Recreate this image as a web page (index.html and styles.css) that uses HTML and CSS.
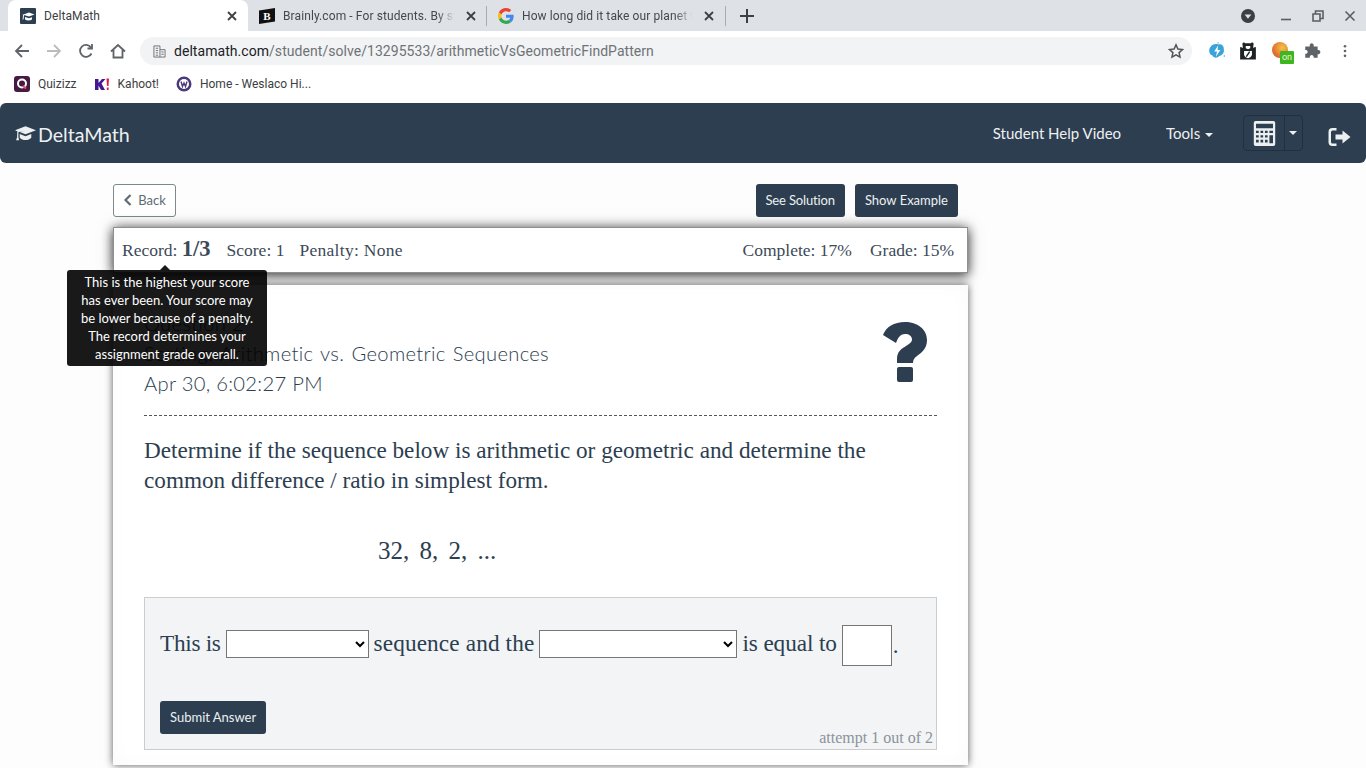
FILE: index.html
```html
<!DOCTYPE html>
<html lang="en">
<head>
<meta charset="utf-8">
<title>DeltaMath</title>
<link rel="stylesheet" href="styles.css">
</head>
<body>
<div class="tabstrip">
  <div class="tab tab-active">
    <svg class="fav" viewBox="0 0 16 16"><rect width="16" height="16" rx="1" fill="#2c3e50"/><path d="M2 7l7-2.500 5.500 2L9 8.600 4.500 7.200 8.500 6.400 4 7.200 3.500 11.500 2.600 11.500 3 6.900zM5 9l4 1.200 3-1v2.200c-2 1.300-5 1.300-7 0z" fill="#fff"/></svg>
    <span class="tab-title">DeltaMath</span>
    <svg class="tab-x" viewBox="0 0 10 10"><path d="M1 1l8 8M9 1l-8 8"/></svg>
  </div>
  <div class="tab tab-b">
    <svg class="fav" viewBox="0 0 16 16"><path d="M0 2.500L16 0V13.500L0 16z" fill="#111"/><text x="8" y="12" class="fav-b">B</text></svg>
    <span class="tab-title tab-fade">Brainly.com - For students. By students.</span>
    <svg class="tab-x" viewBox="0 0 10 10"><path d="M1 1l8 8M9 1l-8 8"/></svg>
  </div>
  <div class="sep"></div>
  <div class="tab tab-c">
    <svg class="fav" viewBox="0 0 48 48"><path fill="#EA4335" d="M24 9.500c3.500 0 6.700 1.300 9.100 3.500l6.800-6.800C35.800 2.400 30.300 0 24 0 14.600 0 6.500 5.400 2.600 13.200l7.900 6.200C12.400 13.700 17.700 9.500 24 9.500z"/><path fill="#4285F4" d="M46.900 24.500c0-1.600-.1-3.100-.4-4.500H24v9h12.900c-.6 3-2.200 5.500-4.700 7.200l7.700 6c4.500-4.200 7-10.300 7-17.700z"/><path fill="#FBBC05" d="M10.500 28.600c-.5-1.400-.8-3-.8-4.600s.3-3.200.8-4.600l-7.900-6.200C.9 16.500 0 20.100 0 24s.9 7.500 2.600 10.800z"/><path fill="#34A853" d="M24 48c6.500 0 11.900-2.100 15.900-5.800l-7.700-6c-2.200 1.500-5 2.300-8.200 2.300-6.300 0-11.600-4.200-13.500-9.900l-7.900 6.100C6.500 42.600 14.600 48 24 48z"/></svg>
    <span class="tab-title tab-fade">How long did it take our planet to form?</span>
    <svg class="tab-x" viewBox="0 0 10 10"><path d="M1 1l8 8M9 1l-8 8"/></svg>
  </div>
  <div class="sep"></div>
  <svg class="newtab" viewBox="0 0 14 14"><path d="M7 0v14M0 7h14"/></svg>
  <div class="winctl">
    <svg class="ctl-search" viewBox="0 0 14 14"><circle cx="7" cy="7" r="7" fill="#3c4043"/><path d="M3.600 5.500h6.800L7 9.800z" fill="#dee1e6"/></svg>
    <svg class="ctl" viewBox="0 0 12 12"><path d="M1 9.500h10"/></svg>
    <svg class="ctl" viewBox="0 0 12 12"><path d="M1 4h7v7H1zM3.500 3.500V1H11v7.500H8.500"/></svg>
    <svg class="ctl" viewBox="0 0 12 12"><path d="M1.500 1.500l9 9M10.500 1.500l-9 9"/></svg>
  </div>
</div>

<div class="toolbar">
  <svg class="tool" viewBox="0 0 16 16"><path d="M15 8H2M8 2L2 8l6 6"/></svg>
  <svg class="tool tool-off" viewBox="0 0 16 16"><path d="M1 8h13M8 2l6 6-6 6"/></svg>
  <svg class="tool" viewBox="0 0 16 16"><path d="M13.500 10.500A6 6 0 1 1 13 4.500M14 1v4.500H9.500"/></svg>
  <svg class="tool" viewBox="0 0 16 16"><path d="M1 8.500L8 2l7 6.500M3.500 7v7.500h9V7"/></svg>
  <div class="omnibox">
    <svg class="site-icon" viewBox="0 0 14 14"><path d="M1 1h6.500v12H1zM7.500 5H13v8H7.500M3 3.500h2.500M3 6h2.500M3 8.500h2.500M3 11h2.500M9 7.500h2.500M9 10h2.500"/></svg>
    <span class="url"><span class="url-host">deltamath.com</span>/student/solve/13295533/arithmeticVsGeometricFindPattern</span>
    <svg class="star" viewBox="0 0 16 16"><path d="M8 1.800l1.900 4.200 4.600.5-3.400 3.100.9 4.500L8 11.800l-4 2.300.9-4.500L1.500 6.500l4.600-.5z"/></svg>
  </div>
  <div class="exts">
    <svg class="ext" viewBox="0 0 16 16"><path d="M2.500 4C4.500 1.500 7.500 1.500 9 2.200c2.500-1 5.500 1 5 4.300.8 3-1.500 5.500-4 6-2 2.500-5.500 1.500-6-.5C1 11.500 0 6.500 2.500 4z" fill="#3aa3d8"/><path d="M9 3L5.500 8.500h2.500L7 13l4-6H8.500z" fill="#fff"/><circle cx="14.500" cy="12.500" r=".7" fill="#3aa3d8"/><circle cx="9" cy=".8" r=".6" fill="#3aa3d8"/></svg>
    <svg class="ext ext-bear" viewBox="0 0 16 16"><path d="M3 1.500a1.500 1.500 0 0 1 2.500-.5h5a1.500 1.500 0 0 1 2.500.5L12.500 5l2.500-.5V15.500H1V4.500L3.500 5z" fill="#1e2325"/><path d="M6 3.500h4v2l-2 1-2-1z" fill="#fff"/><path d="M4.500 8h7v3c0 1.500-2 3-3.500 3.500C6.500 14 4.500 12.500 4.500 11z" fill="#fff"/><path d="M9.500 8.500L6.500 13" stroke="#1e2325" stroke-width="1.300"/></svg>
    <div class="ext-on">
      <div class="orb"></div>
      <span class="on-badge">on</span>
    </div>
    <svg class="ext ext-puz" viewBox="0 0 16 16"><path d="M6 2.500a1.800 1.800 0 0 1 3.500 0V4h3.500v3.200h1a1.900 1.900 0 0 1 0 3.700h-1V14H9.500v-1a1.800 1.800 0 0 0-3.500 0v1H2v-3.500h1a1.900 1.900 0 0 0 0-3.500H2V4h4z" fill="#5f6368"/></svg>
    <svg class="kebab" viewBox="0 0 16 16"><circle cx="8" cy="2.500" r="1.500"/><circle cx="8" cy="8" r="1.500"/><circle cx="8" cy="13.500" r="1.500"/></svg>
  </div>
</div>

<div class="bookmarks">
  <div class="bm">
    <svg class="bm-icon" viewBox="0 0 16 16"><rect width="16" height="16" rx="3" fill="#461a42"/><circle cx="8" cy="7.500" r="4" fill="none" stroke="#fff" stroke-width="2"/><path d="M9 10l3 2.500" stroke="#ef4a5f" stroke-width="2"/></svg>
    <span>Quizizz</span>
  </div>
  <div class="bm">
    <svg class="bm-icon" viewBox="0 0 16 16"><path d="M1 3h3.500v4L8 3h3.500L7.500 7.500 11 14H7L4.500 9.500V14H1z" fill="#46178f"/><path d="M12.500 2.500h2.500l-.5 7.500h-1.500zM12.800 11.500h1.800V14h-1.800z" fill="#e21b3c"/></svg>
    <span>Kahoot!</span>
  </div>
  <div class="bm">
    <svg class="bm-icon" viewBox="0 0 16 16"><circle cx="8" cy="8" r="7.500" fill="#4b3a7a"/><circle cx="8" cy="8" r="5" fill="#fff"/><path d="M5 5.500l1.500 5 1.500-3.500 1.500 3.500 1.500-5" fill="none" stroke="#4b3a7a" stroke-width="1.400"/></svg>
    <span>Home - Weslaco Hi...</span>
  </div>
</div>

<nav class="navbar">
  <div class="brand">
    <svg class="brand-icon" viewBox="0 0 20 16"><path d="M10 1L20 4.800 10 8.600 4.500 6.500 10 5.500 3.300 6.500 3.200 11.500 4 14.500H1L2 11.500 2.200 5.800 0 4.800zM4.500 8.500L10 10.500 15.500 8.500V12C13 15 7 15 4.500 12z"/></svg>
    <span>DeltaMath</span>
  </div>
  <div class="nav-right">
    <a class="nav-link">Student Help Video</a>
    <a class="nav-link nav-tools">Tools <span class="caret"></span></a>
    <div class="calc-group">
      <div class="calc-main">
        <svg class="calc-icon" viewBox="0 0 24 28"><path fill-rule="evenodd" d="M2 0h20a2 2 0 0 1 2 2v24a2 2 0 0 1-2 2H2a2 2 0 0 1-2-2V2a2 2 0 0 1 2-2zM2.500 3v5h19V3zM2.500 11v2.500h3V11zM7.500 11v2.500h3V11zM12.500 11v2.500h3V11zM17.500 11v2.500h4V11zM2.500 16v2.500h3V16zM7.500 16v2.500h3V16zM12.500 16v2.500h3V16zM17.500 16v9h4V16zM2.500 21v3h3V21zM7.500 21v3h3V21zM12.500 21v3h3V21z"/></svg>
      </div>
      <div class="calc-caret"><span class="caret"></span></div>
    </div>
    <svg class="logout" viewBox="0 0 22 18"><path d="M8 0v2.500H4A1.500 1.500 0 0 0 2.500 4v10A1.500 1.500 0 0 0 4 15.500h4V18H4a4 4 0 0 1-4-4V4a4 4 0 0 1 4-4zM14 2.500l8 6.500-8 6.500v-4H7v-5h7z"/></svg>
  </div>
</nav>

<main class="main">
  <div class="actions">
    <button class="btn-back"><svg class="chev" viewBox="0 0 8 12"><path d="M6.500 1L1.500 6l5 5"/></svg>Back</button>
    <div class="action-right">
      <button class="btn-dark btn-see">See Solution</button>
      <button class="btn-dark">Show Example</button>
    </div>
  </div>

  <div class="status">
    <div class="status-group">
      <span class="record">Record: <b>1/3</b></span>
      <span>Score: 1</span>
      <span class="penalty">Penalty: None</span>
    </div>
    <div class="status-group status-end">
      <span>Complete: 17%</span>
      <span>Grade: 15%</span>
    </div>
    <div class="tooltip">
      <div class="tip-arrow"></div>
      This is the highest your score has ever been. Your score may be lower because of a penalty. The record determines your assignment grade overall.
    </div>
  </div>

  <section class="card">
    <div class="card-head">
      <div class="titles">
        <div class="hand">Question 2</div>
        <div class="hand hand-title">Sorting: Arithmetic vs. Geometric Sequences</div>
        <div class="hand">Apr 30, 6:02:27 PM</div>
      </div>
      <svg class="qmark" viewBox="0 0 44 60"><path d="M0 13C3 5 11 0 22 0C34 0 44 7 44 18C44 27 38 31 34 34C31 36 30 38 30 41H14V37C14 30 18 27 23 24C27 21.500 29 20 29 17.500C29 14 26 12 22 12C18 12 15 15 13 21Z M14 47a2 2 0 0 1 2-2h12a2 2 0 0 1 2 2v11a2 2 0 0 1-2 2H16a2 2 0 0 1-2-2z"/></svg>
    </div>
    <p class="prompt">Determine if the sequence below is arithmetic or geometric and determine the common difference / ratio in simplest form.</p>
    <div class="sequence">32, 8, 2, ...</div>
    <div class="answer">
      <div class="answer-line">
        <span class="txt-a">This is</span>
        <select class="sel sel-a"><option></option></select>
        <span class="txt-b">sequence and the</span>
        <select class="sel sel-b"><option></option></select>
        <span class="txt-c">is equal to</span>
        <input class="num" type="text">
        <span class="dot">.</span>
      </div>
      <button class="btn-dark btn-submit">Submit Answer</button>
      <div class="attempt">attempt 1 out of 2</div>
    </div>
  </section>
</main>
</body>
</html>
```

FILE: styles.css
```css
* { box-sizing: border-box; }
html, body { margin: 0; padding: 0; height: 768px; overflow: hidden; }
body { background: #fdfdfd; color: #2c3e50; font-family: "Lato", "Liberation Sans", sans-serif; }

.tabstrip { height: 31px; background: #dee1e6; display: flex; align-items: center; font-family: "Roboto", "Liberation Sans", sans-serif; }
.tab { height: 31px; display: flex; align-items: center; font-size: 12px; color: #45484c; flex: none; }
.tab-active { width: 240px; background: #fff; border-radius: 8px 8px 0 0; color: #3c4043; margin-left: 8px; padding: 0 11px 0 12px; }
.tab-b { width: 238px; padding: 0 10px 0 11px; }
.tab-c { width: 238px; padding: 0 11px; }
.fav { width: 16px; height: 16px; flex: none; }
.fav-b { font: bold 11px "Liberation Serif", serif; fill: #fff; text-anchor: middle; }
.tab-title { flex: 1; margin-left: 8px; white-space: nowrap; overflow: hidden; letter-spacing: .1px; }
.tab-fade { -webkit-mask-image: linear-gradient(90deg, #000 88%, transparent 98%); mask-image: linear-gradient(90deg, #000 88%, transparent 98%); }
.tab-x { width: 10px; height: 10px; flex: none; margin-left: 8px; fill: none; stroke: #3c4043; stroke-width: 1.800; }
.sep { width: 1px; height: 20px; background: #a8abaf; flex: none; }
.newtab { width: 14px; height: 14px; margin-left: 14px; fill: none; stroke: #3c4043; stroke-width: 2; flex: none; }
.winctl { margin-left: auto; display: flex; align-items: center; padding-right: 10px; }
.ctl-search { width: 14px; height: 14px; margin-right: 25px; }
.ctl { width: 12px; height: 12px; margin-left: 20px; fill: none; stroke: #5a5e63; stroke-width: 1.600; }
.ctl-search + .ctl { margin-left: 0; }

.toolbar { height: 40px; background: #fff; display: flex; align-items: center; padding-left: 14px; font-family: "Roboto", "Liberation Sans", sans-serif; }
.tool { width: 16px; height: 16px; margin-right: 16px; fill: none; stroke: #5f6368; stroke-width: 1.800; flex: none; }
.tool-off { stroke: #babcbe; }
.omnibox { width: 1052px; height: 28px; margin-left: -2px; background: #f1f3f4; border-radius: 14px; display: flex; align-items: center; padding: 0 8px 0 13px; font-size: 14px; flex: none; }
.site-icon { width: 13px; height: 13px; fill: none; stroke: #6b6f73; stroke-width: 1; flex: none; }
.url { margin-left: 8px; color: #6f7276; flex: 1; letter-spacing: .05px; }
.url-host { color: #202124; }
.star { width: 16px; height: 16px; fill: none; stroke: #505458; stroke-width: 1.500; }
.exts { display: flex; align-items: center; margin-left: 16px; }
.ext { width: 18px; height: 18px; margin-right: 13px; flex: none; }
.ext-bear { margin-right: 15px; }
.ext-puz { margin-right: 17px; }
.ext-on { width: 22px; height: 22px; margin-right: 9px; position: relative; flex: none; }
.orb { width: 16px; height: 16px; border-radius: 50%; background: radial-gradient(circle at 65% 35%, #f7c24b, #e2762e 60%, #b9552b); position: absolute; left: 0; top: 2px; }
.on-badge { position: absolute; left: 8px; top: 11px; width: 14px; height: 13px; background: #3fb51f; color: #e8f5d8; font-size: 9px; line-height: 13px; text-align: center; border-radius: 1px; }
.kebab { fill: #5f6368; width: 14px; height: 14px; flex: none; }

.bookmarks { height: 28px; background: #fff; display: flex; align-items: center; padding: 0 0 3px 14px; font-family: "Roboto", "Liberation Sans", sans-serif; font-size: 12px; color: #3c4043; gap: 17px; }
.bm { display: flex; align-items: center; gap: 8px; }
.bm-icon { width: 16px; height: 16px; flex: none; }

.navbar { margin-top: 4px; height: 60px; background: #2c3e50; border-radius: 6px; display: flex; align-items: center; justify-content: space-between; padding: 0 15px; color: #ecf0f1; }
.brand { display: flex; align-items: center; gap: 2px; font-size: 19.600px; padding-top: 3px; }
.brand-icon { width: 21px; height: 17px; fill: #ecf0f1; margin-bottom: 3px; }
.nav-right { display: flex; align-items: center; }
.nav-link { font-size: 15px; color: #ecf0f1; padding-bottom: 1px; }
.nav-tools { margin-left: 45px; }
.caret { display: inline-block; border-top: 4px solid #ecf0f1; border-left: 4px solid transparent; border-right: 4px solid transparent; vertical-align: middle; margin-left: 1px; }
.calc-group { margin-left: 30px; height: 36px; display: flex; border: 1px solid #22303e; border-radius: 4px; }
.calc-main { width: 41px; display: flex; align-items: center; justify-content: center; border-right: 1px solid #22303e; }
.calc-icon { width: 23px; height: 25px; fill: #ecf0f1; }
.calc-caret { width: 17px; padding-right: 3px; display: flex; align-items: center; justify-content: center; }
.logout { width: 23px; height: 18px; margin-left: 25px; margin-top: 8px; fill: #ecf0f1; }

.main { width: 855px; margin-left: 113px; }
.actions { display: flex; justify-content: space-between; padding: 21px 10px 10px 0; }
.action-right { display: flex; gap: 10px; }
.btn-back { height: 33px; width: 63px; padding: 0 0 1px 1px; background: #fff; border: 1px solid #7b8a8b; border-radius: 3px; color: #5f6b73; font: 13px "Lato", sans-serif; display: flex; align-items: center; justify-content: center; gap: 6px; }
.chev { width: 8px; height: 12px; fill: none; stroke: #5f6b73; stroke-width: 2.200; }
.btn-dark { height: 33px; padding: 0 10px 1px; background: #2c3e50; border: 0; border-radius: 3px; color: #ecf0f1; font: 13px "Lato", sans-serif; }
.btn-see { letter-spacing: -.15px; }

.status { position: relative; height: 46px; background: #fff; border: 1px solid #8f8f8f; box-shadow: 0 0 12px rgba(0,0,0,.55), 0 4px 10px rgba(0,0,0,.45); display: flex; justify-content: space-between; align-items: center; padding: 0 13px 2px 8px; font: 17.500px "Liberation Serif", serif; color: #3c4a58; }
.status-group { display: flex; gap: 15px; align-items: baseline; }
.status-end { gap: 18px; padding-top: 2px; }
.record { margin-right: 1px; }
.record b { font-size: 22.500px; }
.penalty { letter-spacing: .3px; }
.tooltip { position: absolute; left: -47px; top: 42px; width: 200px; height: 96px; padding: 3px 13px; background: rgba(0,0,0,.9); color: #fff; border-radius: 3px; font: 13px/18px "Lato", sans-serif; text-align: center; z-index: 5; }
.tip-arrow { position: absolute; left: 93px; top: -5px; border-bottom: 5px solid rgba(0,0,0,.9); border-left: 5px solid transparent; border-right: 5px solid transparent; }

.card { margin-top: 12px; height: 480px; background: #fff; box-shadow: 0 0 8px rgba(0,0,0,.65), inset 0 0 20px rgba(0,0,0,.025); padding: 0 31px; position: relative; }
.card-head { height: 131px; display: flex; justify-content: space-between; border-bottom: 1px dashed #555; position: relative; }
.titles { padding-top: 23px; }
.hand { font: 300 20.200px/30px "Lato", sans-serif; letter-spacing: .3px; color: #2c3e50; }
.hand-title { word-spacing: 1.500px; }
.qmark { position: absolute; right: 10px; top: 37px; width: 44px; height: 60px; fill: #2c3e50; }
.prompt { margin: 19px 0 0; font: 23.200px/30px "Liberation Serif", serif; color: #2c3e50; }
.sequence { margin: 41px 0 0 234px; font: 25px/30px "Liberation Serif", serif; word-spacing: 4px; color: #2c3e50; }
.answer { position: relative; margin-top: 31px; height: 153px; background: #f2f4f6; border: 1px solid #ccc; padding: 27px 15px; font: 23.250px "Liberation Serif", serif; color: #2c3e50; }
.answer-line { display: flex; align-items: center; height: 41px; gap: 5px; }
.answer-line span { margin-bottom: 4px; }
.txt-a { letter-spacing: -.3px; }
.txt-b { letter-spacing: .125px; }
.txt-c { letter-spacing: -.1px; }
.sel { height: 28px; margin-bottom: 3px; background: #fff; border: 1px solid #767676; border-radius: 0; font-size: 16px; }
.sel-a { width: 143px; }
.sel-b { width: 198px; }
.num { width: 50px; height: 41px; border: 1px solid #767676; background: #fff; }
.answer-line .dot { margin: 0 0 0 -4px; }
.btn-submit { display: block; margin-top: 35px; }
.attempt { position: absolute; right: 3px; bottom: 2px; font: 16px "Liberation Serif", serif; color: #8c939a; }
```
